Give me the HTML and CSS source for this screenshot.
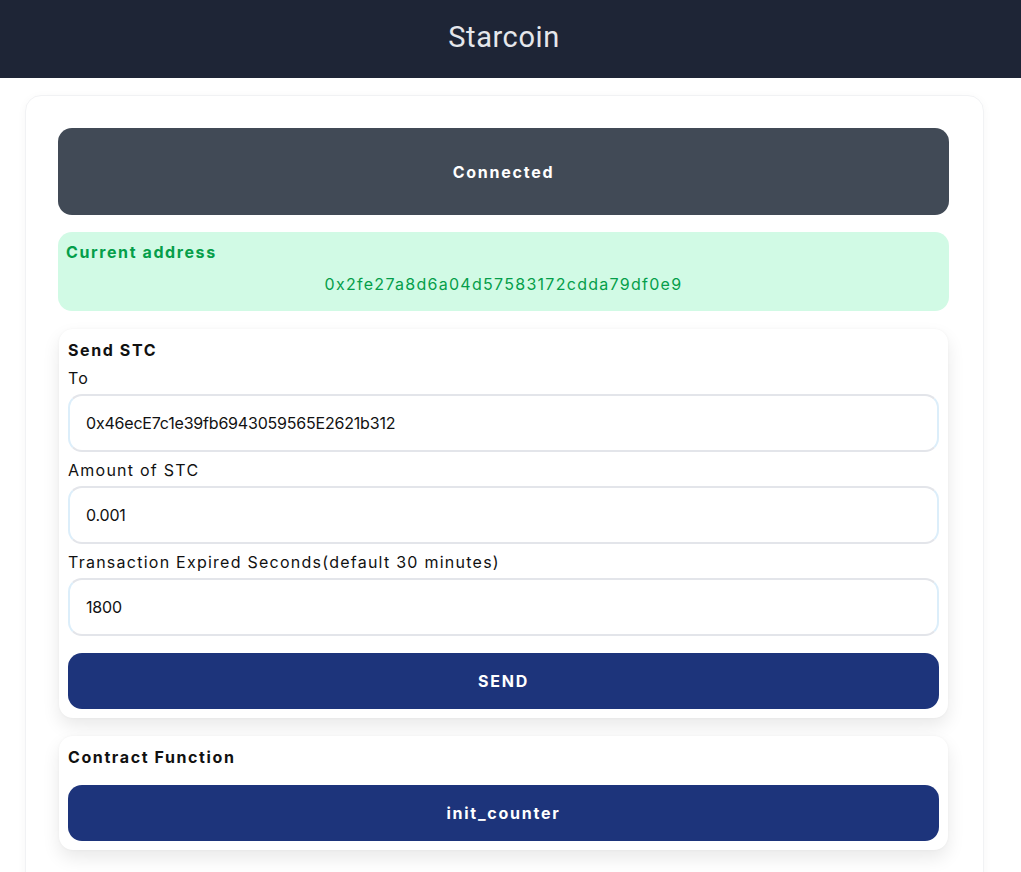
FILE: index.html
```html
<!DOCTYPE html>
<html>
<head>
<meta charset="utf-8">
<link rel="stylesheet" href="styles.css">
</head>
<body>
<header class="topbar"><h1 class="title">Starcoin</h1></header>
<main class="outer">
  <button class="connected">Connected</button>
  <section class="address">
    <div class="address-label">Current address</div>
    <div class="address-value">0x2fe27a8d6a04d57583172cdda79df0e9</div>
  </section>
  <section class="card send">
    <div class="card-title">Send STC</div>
    <label class="field-label">To</label>
    <div class="input">0x46ecE7c1e39fb6943059565E2621b312</div>
    <label class="field-label">Amount of STC</label>
    <div class="input">0.001</div>
    <label class="field-label">Transaction Expired Seconds(default 30 minutes)</label>
    <div class="input">1800</div>
    <button class="primary send-btn">SEND</button>
  </section>
  <section class="card contract">
    <div class="card-title">Contract Function</div>
    <button class="primary fn-btn">init_counter</button>
  </section>
</main>
</body>
</html>
```
FILE: styles.css
```css
html, body { margin: 0; padding: 0; background: #fff; }
body { font-family: Inter, "Noto Sans", sans-serif; color: #111; height: 872px; overflow: hidden; }
.topbar { height: 78px; background: #1e2536; display: flex; align-items: center; justify-content: center; padding: 0 13px 5px 0; box-sizing: border-box; }
.title { margin: 0; font-weight: 400; font-size: 29px; color: #e5e7eb; font-family: Roboto, Inter, sans-serif; letter-spacing: 0.02em; }
.outer { margin: 17px 0 0 25px; width: 959px; box-sizing: border-box; border: 1px solid #f1f2f4; border-radius: 16px; box-shadow: 0 2px 10px rgba(0,0,0,0.04); padding: 32px 34px 40px 32px; min-height: 900px; }
button { font-family: inherit; border: none; cursor: pointer; }
.connected { display: block; width: 100%; height: 87px; background: #414a56; color: #fff; border-radius: 14px; font-weight: 700; font-size: 16px; letter-spacing: 0.11em; }
.address { margin-top: 17px; background: #d1fae5; border-radius: 14px; height: 79px; box-sizing: border-box; padding: 10px 8px; color: #059e4a; }
.address-label { font-weight: 700; font-size: 16px; letter-spacing: 0.1em; line-height: 20px; }
.address-value { text-align: center; font-size: 16px; letter-spacing: 0.08em; margin-top: 12px; line-height: 20px; }
.card { background: #fff; border-radius: 14px; box-shadow: 0 8px 18px rgba(0,0,0,0.09), 0 0 3px rgba(0,0,0,0.04); margin: 0 1px; padding: 11px 9px 9px; }
.send { margin-top: 18px; }
.contract { margin-top: 18px; padding-bottom: 9px; }
.card-title { font-weight: 700; font-size: 16px; letter-spacing: 0.1em; line-height: 20px; }
.field-label { display: block; font-size: 16px; letter-spacing: 0.078em; line-height: 20px; margin-top: 8px; margin-bottom: 6px; }
.input { height: 58px; box-sizing: border-box; border: 2px solid #e3e5ea; border-left-color: #dceefa; border-right-color: #dceefa; border-radius: 14px; padding: 0 16px; display: flex; align-items: center; font-size: 16px; letter-spacing: -0.2px; color: #111; }
.primary { display: block; width: 100%; height: 56px; background: #1d347b; color: #fff; border-radius: 14px; font-weight: 700; font-size: 16px; letter-spacing: 0.11em; }
.send-btn { margin-top: 17px; }
.fn-btn { margin-top: 18px; }
```
